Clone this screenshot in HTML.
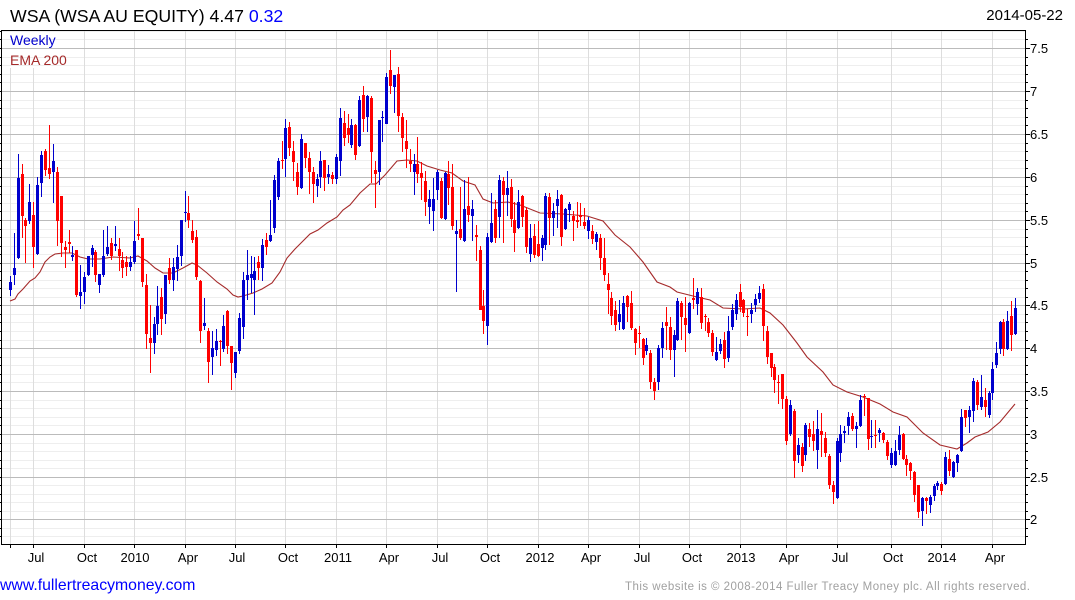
<!DOCTYPE html>
<html><head><meta charset="utf-8"><title>WSA</title>
<style>
html,body{margin:0;padding:0;background:#fff;width:1075px;height:600px;overflow:hidden}
svg{display:block}
text{font-family:"Liberation Sans",Arial,sans-serif}
.c{shape-rendering:crispEdges}
.b{fill:#0000cd}.r{fill:#f00}
</style></head><body>
<svg width="1075" height="600" viewBox="0 0 1075 600" xmlns="http://www.w3.org/2000/svg">
<rect width="1075" height="600" fill="#fff"/>
<path class="c" fill="none" stroke="#eee" d="M2 31.5H1025M2 39.5H1025M2 57.5H1025M2 65.5H1025M2 74.5H1025M2 82.5H1025M2 100.5H1025M2 108.5H1025M2 117.5H1025M2 125.5H1025M2 143.5H1025M2 151.5H1025M2 160.5H1025M2 168.5H1025M2 186.5H1025M2 194.5H1025M2 203.5H1025M2 211.5H1025M2 229.5H1025M2 237.5H1025M2 246.5H1025M2 254.5H1025M2 271.5H1025M2 280.5H1025M2 288.5H1025M2 297.5H1025M2 314.5H1025M2 322.5H1025M2 331.5H1025M2 340.5H1025M2 357.5H1025M2 365.5H1025M2 374.5H1025M2 382.5H1025M2 400.5H1025M2 408.5H1025M2 417.5H1025M2 425.5H1025M2 443.5H1025M2 451.5H1025M2 460.5H1025M2 468.5H1025M2 485.5H1025M2 494.5H1025M2 502.5H1025M2 511.5H1025M2 528.5H1025M2 536.5H1025"/>
<path class="c" fill="none" stroke="#ddd" d="M10.5 68V544M33.5 68V544M84.5 31V544M134.5 31V544M185.5 31V544M235.5 31V544M285.5 31V544M336.5 31V544M386.5 31V544M437.5 31V544M487.5 31V544M538.5 31V544M588.5 31V544M639.5 31V544M689.5 31V544M740.5 31V544M786.5 31V544M837.5 31V544M891.5 31V544M941.5 31V544M992.5 31V544"/>
<path class="c" fill="none" stroke="#bbb" d="M2 48.5H1025M2 91.5H1025M2 134.5H1025M2 177.5H1025M2 220.5H1025M2 263.5H1025M2 305.5H1025M2 348.5H1025M2 391.5H1025M2 434.5H1025M2 477.5H1025M2 519.5H1025"/>
<polyline fill="none" stroke="#a52a2a" stroke-width="1.1" points="10,301 15,299 18,294 23,289 30,281 35,278 40,272 45,262 50,257 55,254 63,253 72,253 80,257 88,259 100,259 113,257 130,258 138,256 147,261 155,268 163,273 173,273 183,268 192,263 197,265 207,273 217,282 227,289 233,295 238,297 243,296 253,293 262,289 272,283 280,272 287,258 295,249 302,242 310,234 318,230 327,223 337,217 343,210 350,205 360,193 370,184 376,184 385,175 397,161 407,160 417,161 427,166 440,170 452,173 463,181 475,185 483,199 493,203 508,202 520,205 540,213 563,214 587,216 603,221 615,235 630,247 643,262 657,282 670,287 677,292 685,294 697,297 710,300 723,308 743,309 760,308 770,313 783,325 797,343 807,357 823,372 833,385 847,392 863,397 880,404 893,412 907,417 923,433 940,445 957,449 967,443 975,437 988,432 1000,422 1015,404"/>
<g class="c">
<path class="b" d="M10 276h1v20h-1M9 282h3v8h-3M14 233h1v52h-1M13 268h3v7h-3M18 154h1v105h-1M17 178h3v80h-3"/>
<path class="r" d="M22 164h1v74h-1M21 174h3v42h-3M25 218h1v45h-1M24 220h3v6h-3"/>
<path class="b" d="M29 184h1v40h-1M28 202h3v19h-3"/>
<path class="r" d="M33 202h1v66h-1M32 215h3v32h-3"/>
<path class="b" d="M37 177h1v78h-1M36 185h3v69h-3M41 151h1v46h-1M40 155h3v28h-3"/>
<path class="r" d="M45 149h1v27h-1M44 151h3v19h-3M49 125h1v54h-1M48 168h3v6h-3"/>
<path class="b" d="M53 144h1v59h-1M52 161h3v11h-3"/>
<path class="r" d="M57 167h1v79h-1M56 172h3v49h-3M61 196h1v61h-1M60 196h3v47h-3M65 241h1v27h-1M64 247h3v3h-3M69 230h1v23h-1M68 242h3v2h-3"/>
<path class="b" d="M72 246h1v15h-1M71 255h3v2h-3"/>
<path class="r" d="M76 250h1v47h-1M75 250h3v45h-3"/>
<path class="b" d="M80 265h1v44h-1M79 292h3v4h-3M84 272h1v32h-1M83 277h3v15h-3M88 256h1v20h-1M87 256h3v19h-3M92 245h1v22h-1M91 248h3v7h-3"/>
<path class="r" d="M95 250h1v32h-1M94 252h3v23h-3"/>
<path class="b" d="M99 274h1v19h-1M98 274h3v11h-3M103 230h1v47h-1M102 256h3v19h-3M107 226h1v30h-1M106 247h3v7h-3"/>
<path class="r" d="M111 238h1v22h-1M110 243h3v13h-3"/>
<path class="b" d="M115 226h1v25h-1M114 244h3v2h-3"/>
<path class="r" d="M119 238h1v33h-1M118 249h3v7h-3M122 252h1v26h-1M121 260h3v8h-3M126 256h1v20h-1M125 262h3v5h-3"/>
<path class="b" d="M130 256h1v15h-1M129 262h3v5h-3M134 221h1v43h-1M133 241h3v21h-3"/>
<path class="r" d="M138 208h1v32h-1M137 234h3v2h-3M142 238h1v49h-1M141 238h3v44h-3M146 274h1v75h-1M145 285h3v49h-3M150 305h1v68h-1M149 338h3v5h-3"/>
<path class="b" d="M154 317h1v37h-1M153 324h3v19h-3M157 286h1v49h-1M156 306h3v18h-3"/>
<path class="r" d="M161 288h1v47h-1M160 297h3v22h-3"/>
<path class="b" d="M165 275h1v49h-1M164 275h3v39h-3"/>
<path class="r" d="M169 258h1v26h-1M168 268h3v12h-3"/>
<path class="b" d="M173 258h1v33h-1M172 267h3v13h-3M177 245h1v36h-1M176 257h3v12h-3M181 220h1v46h-1M180 220h3v36h-3M185 191h1v31h-1M184 212h3v1h-3"/>
<path class="r" d="M188 196h1v32h-1M187 213h3v7h-3M192 220h1v23h-1M191 231h3v9h-3M196 230h1v50h-1M195 237h3v40h-3M200 280h1v63h-1M199 281h3v50h-3"/>
<path class="b" d="M204 298h1v32h-1M203 323h3v3h-3"/>
<path class="r" d="M208 328h1v55h-1M207 331h3v31h-3"/>
<path class="b" d="M212 331h1v44h-1M211 348h3v9h-3M216 329h1v27h-1M215 341h3v9h-3"/>
<path class="r" d="M220 340h1v26h-1M219 341h3v1h-3"/>
<path class="b" d="M223 315h1v37h-1M222 326h3v23h-3"/>
<path class="r" d="M227 310h1v44h-1M226 311h3v35h-3M231 346h1v44h-1M230 346h3v17h-3"/>
<path class="b" d="M235 352h1v26h-1M234 352h3v21h-3M239 313h1v41h-1M238 318h3v33h-3M243 272h1v67h-1M242 280h3v47h-3M247 250h1v50h-1M246 275h3v5h-3M251 256h1v37h-1M250 274h3v4h-3M254 257h1v58h-1M253 271h3v9h-3"/>
<path class="r" d="M258 256h1v24h-1M257 262h3v6h-3"/>
<path class="b" d="M262 239h1v42h-1M261 245h3v23h-3"/>
<path class="r" d="M266 233h1v22h-1M265 240h3v7h-3"/>
<path class="b" d="M270 200h1v42h-1M269 235h3v6h-3M274 175h1v58h-1M273 180h3v48h-3M278 158h1v42h-1M277 161h3v36h-3"/>
<path class="r" d="M282 141h1v28h-1M281 160h3v1h-3"/>
<path class="b" d="M285 119h1v58h-1M284 128h3v31h-3"/>
<path class="r" d="M289 122h1v34h-1M288 127h3v21h-3M293 141h1v40h-1M292 151h3v11h-3M297 163h1v32h-1M296 172h3v15h-3"/>
<path class="b" d="M301 134h1v55h-1M300 139h3v49h-3"/>
<path class="r" d="M305 143h1v25h-1M304 143h3v15h-3M309 152h1v42h-1M308 158h3v14h-3M313 167h1v36h-1M312 172h3v12h-3"/>
<path class="b" d="M317 174h1v23h-1M316 179h3v7h-3M320 151h1v37h-1M319 161h3v16h-3"/>
<path class="r" d="M324 160h1v31h-1M323 160h3v18h-3"/>
<path class="b" d="M328 165h1v19h-1M327 174h3v3h-3"/>
<path class="r" d="M332 172h1v12h-1M331 175h3v4h-3"/>
<path class="b" d="M336 154h1v30h-1M335 157h3v22h-3M340 108h1v68h-1M339 118h3v43h-3"/>
<path class="r" d="M344 111h1v35h-1M343 123h3v15h-3M348 114h1v29h-1M347 128h3v7h-3"/>
<path class="b" d="M351 119h1v29h-1M350 125h3v20h-3"/>
<path class="r" d="M355 124h1v36h-1M354 125h3v30h-3"/>
<path class="b" d="M359 96h1v51h-1M358 100h3v46h-3"/>
<path class="r" d="M363 86h1v46h-1M362 95h3v24h-3"/>
<path class="b" d="M367 95h1v37h-1M366 96h3v21h-3"/>
<path class="r" d="M371 96h1v87h-1M370 98h3v54h-3M375 161h1v47h-1M374 170h3v4h-3"/>
<path class="b" d="M379 120h1v65h-1M378 120h3v52h-3M382 111h1v31h-1M381 117h3v1h-3M386 73h1v51h-1M385 77h3v47h-3"/>
<path class="r" d="M390 50h1v44h-1M389 70h3v16h-3"/>
<path class="b" d="M394 75h1v38h-1M393 75h3v12h-3"/>
<path class="r" d="M398 67h1v65h-1M397 74h3v42h-3M402 113h1v39h-1M401 117h3v21h-3M406 120h1v48h-1M405 141h3v8h-3M410 149h1v23h-1M409 161h3v3h-3"/>
<path class="b" d="M414 154h1v41h-1M413 164h3v8h-3"/>
<path class="r" d="M417 137h1v46h-1M416 164h3v10h-3M421 162h1v38h-1M420 173h3v5h-3M425 171h1v45h-1M424 181h3v21h-3"/>
<path class="b" d="M429 190h1v34h-1M428 199h3v8h-3M433 178h1v53h-1M432 199h3v12h-3M437 170h1v30h-1M436 172h3v18h-3"/>
<path class="r" d="M441 178h1v41h-1M440 181h3v37h-3"/>
<path class="b" d="M445 172h1v48h-1M444 173h3v46h-3"/>
<path class="r" d="M448 161h1v44h-1M447 174h3v14h-3M452 164h1v66h-1M451 187h3v39h-3"/>
<path class="b" d="M456 220h1v72h-1M455 231h3v3h-3"/>
<path class="r" d="M460 187h1v53h-1M459 229h3v9h-3"/>
<path class="b" d="M464 180h1v62h-1M463 209h3v32h-3"/>
<path class="r" d="M468 177h1v45h-1M467 206h3v9h-3"/>
<path class="b" d="M472 200h1v41h-1M471 209h3v7h-3"/>
<path class="r" d="M476 225h1v36h-1M475 235h3v2h-3M480 246h1v64h-1M479 250h3v60h-3M483 290h1v44h-1M482 306h3v15h-3"/>
<path class="b" d="M487 233h1v112h-1M486 237h3v89h-3M491 193h1v50h-1M490 223h3v19h-3"/>
<path class="r" d="M495 200h1v43h-1M494 209h3v29h-3"/>
<path class="b" d="M499 175h1v63h-1M498 180h3v37h-3"/>
<path class="r" d="M503 177h1v66h-1M502 181h3v14h-3"/>
<path class="b" d="M507 171h1v45h-1M506 188h3v7h-3"/>
<path class="r" d="M511 179h1v48h-1M510 187h3v32h-3M514 202h1v50h-1M513 220h3v13h-3"/>
<path class="b" d="M518 190h1v39h-1M517 202h3v26h-3"/>
<path class="r" d="M522 195h1v32h-1M521 196h3v21h-3M526 207h1v46h-1M525 210h3v37h-3"/>
<path class="b" d="M530 224h1v38h-1M529 238h3v16h-3"/>
<path class="r" d="M534 224h1v34h-1M533 236h3v19h-3M538 221h1v36h-1M537 244h3v12h-3"/>
<path class="b" d="M542 235h1v26h-1M541 238h3v10h-3M545 193h1v57h-1M544 196h3v49h-3"/>
<path class="r" d="M549 193h1v52h-1M548 197h3v21h-3"/>
<path class="b" d="M553 203h1v33h-1M552 211h3v7h-3M557 190h1v38h-1M556 199h3v7h-3"/>
<path class="r" d="M561 194h1v52h-1M560 195h3v42h-3"/>
<path class="b" d="M565 208h1v22h-1M564 209h3v20h-3M569 202h1v20h-1M568 204h3v6h-3"/>
<path class="r" d="M573 211h1v30h-1M572 216h3v5h-3M577 202h1v26h-1M576 220h3v2h-3M580 203h1v23h-1M579 215h3v2h-3M584 208h1v21h-1M583 222h3v4h-3"/>
<path class="b" d="M588 217h1v22h-1M587 220h3v11h-3"/>
<path class="r" d="M592 225h1v19h-1M591 231h3v8h-3"/>
<path class="b" d="M596 232h1v18h-1M595 234h3v8h-3"/>
<path class="r" d="M600 234h1v36h-1M599 238h3v20h-3M604 238h1v43h-1M603 258h3v17h-3M608 273h1v41h-1M607 284h3v6h-3M611 292h1v33h-1M610 298h3v18h-3M615 301h1v30h-1M614 310h3v15h-3"/>
<path class="b" d="M619 300h1v30h-1M618 314h3v8h-3M623 296h1v34h-1M622 303h3v26h-3"/>
<path class="r" d="M627 295h1v27h-1M626 296h3v11h-3M631 291h1v39h-1M630 303h3v25h-3M635 328h1v27h-1M634 329h3v14h-3M639 326h1v22h-1M638 333h3v1h-3M643 338h1v27h-1M642 339h3v19h-3"/>
<path class="b" d="M646 338h1v17h-1M645 345h3v6h-3"/>
<path class="r" d="M650 350h1v39h-1M649 353h3v29h-3M654 378h1v22h-1M653 382h3v9h-3"/>
<path class="b" d="M658 345h1v45h-1M657 348h3v34h-3M662 322h1v36h-1M661 328h3v20h-3"/>
<path class="r" d="M666 307h1v43h-1M665 322h3v4h-3M670 317h1v43h-1M669 327h3v23h-3"/>
<path class="b" d="M674 330h1v47h-1M673 335h3v15h-3M677 298h1v43h-1M676 301h3v39h-3"/>
<path class="r" d="M681 301h1v39h-1M680 303h3v14h-3M685 297h1v55h-1M684 318h3v7h-3"/>
<path class="b" d="M689 302h1v32h-1M688 303h3v30h-3"/>
<path class="r" d="M693 278h1v31h-1M692 298h3v2h-3"/>
<path class="b" d="M697 288h1v27h-1M696 292h3v12h-3"/>
<path class="r" d="M701 288h1v41h-1M700 297h3v26h-3M705 314h1v17h-1M704 316h3v1h-3M708 318h1v19h-1M707 322h3v11h-3M712 330h1v26h-1M711 333h3v19h-3"/>
<path class="b" d="M716 337h1v24h-1M715 352h3v8h-3M720 339h1v15h-1M719 344h3v7h-3"/>
<path class="r" d="M724 332h1v36h-1M723 340h3v19h-3"/>
<path class="b" d="M728 316h1v46h-1M727 331h3v27h-3M732 304h1v26h-1M731 310h3v17h-3M736 294h1v26h-1M735 300h3v14h-3"/>
<path class="r" d="M740 284h1v28h-1M739 292h3v15h-3M743 299h1v18h-1M742 300h3v13h-3M747 309h1v27h-1M746 316h3v1h-3"/>
<path class="b" d="M751 303h1v20h-1M750 310h3v4h-3M755 294h1v18h-1M754 299h3v6h-3M759 286h1v17h-1M758 293h3v6h-3"/>
<path class="r" d="M763 284h1v57h-1M762 289h3v37h-3M767 326h1v38h-1M766 331h3v26h-3M771 353h1v24h-1M770 353h3v15h-3M774 364h1v29h-1M773 367h3v13h-3M778 375h1v29h-1M777 382h3v1h-3M782 374h1v35h-1M781 374h3v25h-3M786 396h1v49h-1M785 399h3v42h-3"/>
<path class="b" d="M790 400h1v36h-1M789 405h3v29h-3"/>
<path class="r" d="M794 409h1v69h-1M793 411h3v50h-3"/>
<path class="b" d="M798 438h1v25h-1M797 445h3v10h-3"/>
<path class="r" d="M802 443h1v29h-1M801 447h3v19h-3"/>
<path class="b" d="M805 423h1v38h-1M804 425h3v30h-3"/>
<path class="r" d="M809 423h1v24h-1M808 429h3v8h-3M813 421h1v30h-1M812 434h3v7h-3"/>
<path class="b" d="M817 410h1v59h-1M816 429h3v21h-3"/>
<path class="r" d="M821 413h1v44h-1M820 431h3v4h-3M825 432h1v25h-1M824 438h3v15h-3M829 454h1v35h-1M828 456h3v29h-3M833 481h1v23h-1M832 485h3v7h-3"/>
<path class="b" d="M837 438h1v61h-1M836 441h3v57h-3M840 425h1v37h-1M839 434h3v19h-3M844 426h1v17h-1M843 431h3v2h-3M848 412h1v23h-1M847 417h3v9h-3"/>
<path class="r" d="M852 413h1v18h-1M851 416h3v13h-3"/>
<path class="b" d="M856 422h1v26h-1M855 426h3v3h-3M860 395h1v32h-1M859 400h3v26h-3"/>
<path class="r" d="M864 394h1v22h-1M863 396h3v1h-3M868 398h1v52h-1M867 398h3v41h-3"/>
<path class="b" d="M871 420h1v28h-1M870 436h3v1h-3"/>
<path class="r" d="M875 420h1v28h-1M874 435h3v1h-3"/>
<path class="b" d="M879 428h1v14h-1M878 430h3v3h-3"/>
<path class="r" d="M883 432h1v11h-1M882 433h3v7h-3M887 440h1v20h-1M886 442h3v14h-3"/>
<path class="b" d="M891 448h1v20h-1M890 453h3v12h-3M895 440h1v26h-1M894 451h3v14h-3M899 426h1v29h-1M898 435h3v15h-3"/>
<path class="r" d="M903 433h1v27h-1M902 434h3v25h-3M906 455h1v21h-1M905 459h3v6h-3M910 462h1v18h-1M909 463h3v8h-3M914 471h1v31h-1M913 472h3v23h-3M918 485h1v33h-1M917 485h3v27h-3"/>
<path class="b" d="M922 497h1v29h-1M921 498h3v13h-3"/>
<path class="r" d="M926 497h1v17h-1M925 498h3v3h-3"/>
<path class="b" d="M930 495h1v18h-1M929 497h3v8h-3M934 484h1v17h-1M933 486h3v10h-3M937 481h1v9h-1M936 483h3v3h-3"/>
<path class="r" d="M941 482h1v13h-1M940 484h3v7h-3"/>
<path class="b" d="M945 452h1v33h-1M944 457h3v27h-3"/>
<path class="r" d="M949 450h1v26h-1M948 459h3v12h-3"/>
<path class="b" d="M953 461h1v17h-1M952 462h3v15h-3M957 454h1v18h-1M956 455h3v8h-3M961 409h1v43h-1M960 417h3v34h-3"/>
<path class="r" d="M965 410h1v17h-1M964 410h3v8h-3"/>
<path class="b" d="M969 406h1v27h-1M968 410h3v7h-3M973 378h1v44h-1M972 381h3v30h-3"/>
<path class="r" d="M977 380h1v30h-1M976 382h3v23h-3"/>
<path class="b" d="M981 375h1v35h-1M980 397h3v10h-3"/>
<path class="r" d="M985 388h1v29h-1M984 400h3v7h-3"/>
<path class="b" d="M989 391h1v27h-1M988 393h3v22h-3M992 362h1v38h-1M991 369h3v24h-3M996 342h1v26h-1M995 353h3v12h-3M1000 321h1v33h-1M999 322h3v27h-3"/>
<path class="r" d="M1003 319h1v37h-1M1002 322h3v27h-3"/>
<path class="b" d="M1007 311h1v39h-1M1006 321h3v28h-3"/>
<path class="r" d="M1011 301h1v50h-1M1010 316h3v19h-3"/>
<path class="b" d="M1015 298h1v37h-1M1014 308h3v26h-3"/>
</g>
<path class="c" fill="none" stroke="#000" d="M1.5 30.5H1025.5V544.5H1.5ZM0 31.5H2M0 39.5H2M0 48.5H2M0 57.5H2M0 65.5H2M0 74.5H2M0 82.5H2M0 91.5H2M0 100.5H2M0 108.5H2M0 117.5H2M0 125.5H2M0 134.5H2M0 143.5H2M0 151.5H2M0 160.5H2M0 168.5H2M0 177.5H2M0 186.5H2M0 194.5H2M0 203.5H2M0 211.5H2M0 220.5H2M0 229.5H2M0 237.5H2M0 246.5H2M0 254.5H2M0 263.5H2M0 271.5H2M0 280.5H2M0 288.5H2M0 297.5H2M0 305.5H2M0 314.5H2M0 322.5H2M0 331.5H2M0 340.5H2M0 348.5H2M0 357.5H2M0 365.5H2M0 374.5H2M0 382.5H2M0 391.5H2M0 400.5H2M0 408.5H2M0 417.5H2M0 425.5H2M0 434.5H2M0 443.5H2M0 451.5H2M0 460.5H2M0 468.5H2M0 477.5H2M0 485.5H2M0 494.5H2M0 502.5H2M0 511.5H2M0 519.5H2M0 528.5H2M0 536.5H2M1026 39.5H1028M1026 48.5H1030M1026 57.5H1028M1026 65.5H1028M1026 74.5H1028M1026 82.5H1028M1026 91.5H1030M1026 100.5H1028M1026 108.5H1028M1026 117.5H1028M1026 125.5H1028M1026 134.5H1030M1026 143.5H1028M1026 151.5H1028M1026 160.5H1028M1026 168.5H1028M1026 177.5H1030M1026 186.5H1028M1026 194.5H1028M1026 203.5H1028M1026 211.5H1028M1026 220.5H1030M1026 229.5H1028M1026 237.5H1028M1026 246.5H1028M1026 254.5H1028M1026 263.5H1030M1026 271.5H1028M1026 280.5H1028M1026 288.5H1028M1026 297.5H1028M1026 305.5H1030M1026 314.5H1028M1026 322.5H1028M1026 331.5H1028M1026 340.5H1028M1026 348.5H1030M1026 357.5H1028M1026 365.5H1028M1026 374.5H1028M1026 382.5H1028M1026 391.5H1030M1026 400.5H1028M1026 408.5H1028M1026 417.5H1028M1026 425.5H1028M1026 434.5H1030M1026 443.5H1028M1026 451.5H1028M1026 460.5H1028M1026 468.5H1028M1026 477.5H1030M1026 485.5H1028M1026 494.5H1028M1026 502.5H1028M1026 511.5H1028M1026 519.5H1030M1026 528.5H1028M1026 536.5H1028M10.5 544V548M33.5 544V548M84.5 544V548M134.5 544V548M185.5 544V548M235.5 544V548M285.5 544V548M336.5 544V548M386.5 544V548M437.5 544V548M487.5 544V548M538.5 544V548M588.5 544V548M639.5 544V548M689.5 544V548M740.5 544V548M786.5 544V548M837.5 544V548M891.5 544V548M941.5 544V548M992.5 544V548"/>
<text x="10" y="22" font-size="17.7" fill="#000">WSA (WSA AU EQUITY) 4.47 <tspan fill="#00f">0.32</tspan></text>
<text x="1063" y="20" font-size="15" fill="#000" text-anchor="end">2014-05-22</text>
<text x="10" y="45" font-size="14" fill="#0000cd">Weekly</text>
<text x="10" y="65" font-size="14" fill="#a52a2a">EMA 200</text>
<g font-size="13" fill="#000">
<text x="1030" y="53">7.5</text><text x="1030" y="96">7</text><text x="1030" y="139">6.5</text><text x="1030" y="182">6</text><text x="1030" y="225">5.5</text><text x="1030" y="268">5</text><text x="1030" y="310">4.5</text><text x="1030" y="353">4</text><text x="1030" y="396">3.5</text><text x="1030" y="439">3</text><text x="1030" y="482">2.5</text><text x="1030" y="524">2</text>
</g>
<g font-size="13" fill="#000" text-anchor="middle">
<text x="36" y="562">Jul</text><text x="87" y="562">Oct</text><text x="135" y="562">2010</text><text x="188" y="562">Apr</text><text x="237" y="562">Jul</text><text x="288" y="562">Oct</text><text x="338" y="562">2011</text><text x="389" y="562">Apr</text><text x="440" y="562">Jul</text><text x="490" y="562">Oct</text><text x="540" y="562">2012</text><text x="591" y="562">Apr</text><text x="642" y="562">Jul</text><text x="692" y="562">Oct</text><text x="741" y="562">2013</text><text x="789" y="562">Apr</text><text x="840" y="562">Jul</text><text x="893" y="562">Oct</text><text x="942" y="562">2014</text><text x="995" y="562">Apr</text>
</g>
<text x="0" y="590" font-size="15.8" fill="#00f">www.fullertreacymoney.com</text>
<text x="625" y="590" font-size="11.5" fill="#a0a0a0" textLength="405" lengthAdjust="spacing">This website is © 2008-2014 Fuller Treacy Money plc. All rights reserved.</text>
</svg>
</body></html>
